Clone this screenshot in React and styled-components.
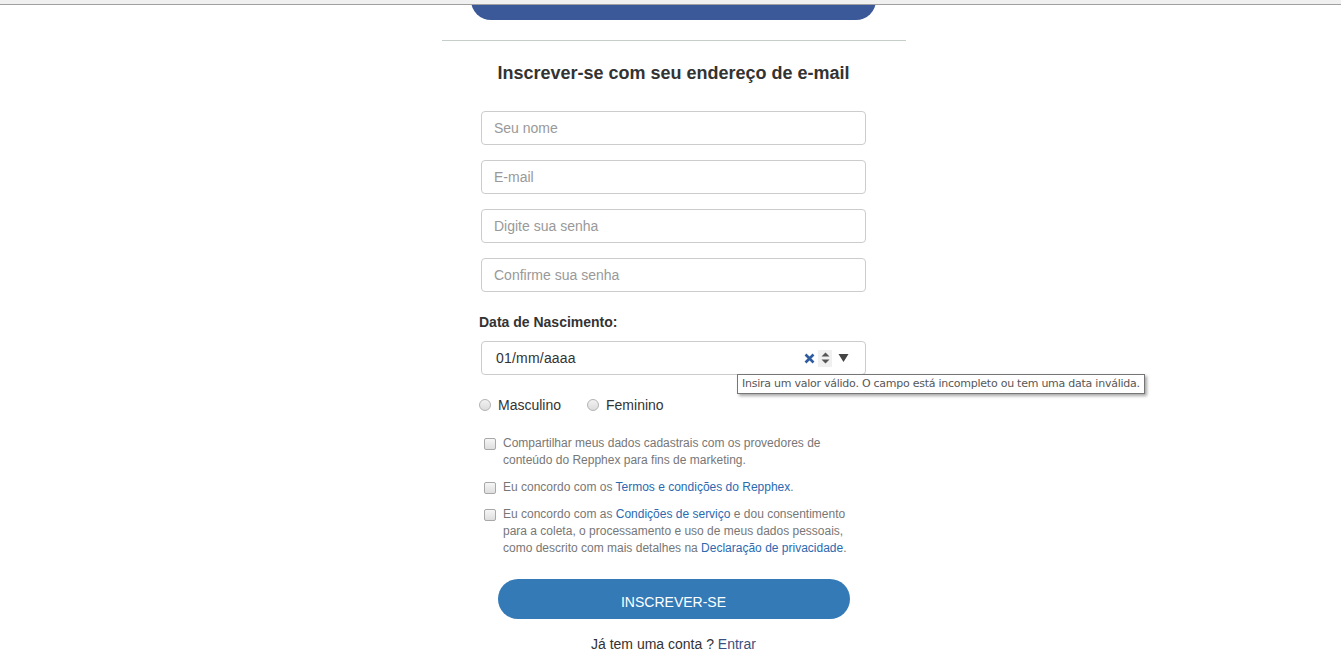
import React from 'react';
import styled, { createGlobalStyle } from 'styled-components';

const GlobalStyle = createGlobalStyle`
  body {
    margin: 0;
    background: #fff;
    font-family: "Liberation Sans", Arial, sans-serif;
  }
`;

const Chrome = styled.div`
  height: 4px;
  background: #f0f0f0;
  border-bottom: 1px solid #a0a0a0;
`;

const Page = styled.div`
  display: flex;
  justify-content: center;
  padding-left: 6px;
`;

const Column = styled.div`
  width: 464px;
  display: flex;
  flex-direction: column;
  align-items: center;
`;

const TopClip = styled.div`
  width: 405px;
  height: 15px;
  overflow: hidden;
  display: flex;
  align-items: flex-end;
`;

const FacebookButton = styled.div`
  width: 405px;
  height: 40px;
  flex-shrink: 0;
  border-radius: 20px;
  background: #3b5998;
`;

const Divider = styled.hr`
  width: 100%;
  border: 0;
  border-top: 1px solid #c5cfc8;
  margin: 20px 0 0;
`;

const Title = styled.h2`
  margin: 22px 0 0;
  font-size: 18px;
  font-weight: bold;
  color: #333;
`;

const Form = styled.form`
  width: 385px;
  margin-top: 27px;
  display: flex;
  flex-direction: column;
`;

const Input = styled.input`
  box-sizing: border-box;
  width: 100%;
  height: 34px;
  margin-bottom: 15px;
  padding: 0 12px;
  border: 1px solid #ccc;
  border-radius: 4px;
  font-family: inherit;
  font-size: 14px;
  color: #333;
  outline: none;
  &::placeholder {
    color: #999;
  }
`;

const Label = styled.label`
  margin: 7px 0 0 -2px;
  font-size: 14px;
  font-weight: bold;
  color: #333;
`;

const DateWrap = styled.div`
  position: relative;
  margin-top: 11px;
`;

const DateField = styled.div`
  box-sizing: border-box;
  height: 34px;
  padding: 0 16px 0 14px;
  border: 1px solid #ccc;
  border-radius: 4px;
  display: flex;
  align-items: center;
  font-size: 14px;
  color: #333;
`;

const DateText = styled.span`
  flex: 1;
  letter-spacing: 0.2px;
`;

const DateControls = styled.div`
  display: flex;
  align-items: center;
  gap: 3px;
`;

const Spinner = styled.div`
  width: 14px;
  height: 17px;
  background: #f0f0f0;
  display: flex;
  align-items: center;
  justify-content: center;
  margin-right: 3px;
`;

const Tooltip = styled.div`
  position: absolute;
  left: 256px;
  top: 33px;
  white-space: nowrap;
  padding: 2px 4px 3px;
  border: 1px solid #767676;
  background: #fff;
  box-shadow: 2px 2px 3px rgba(0, 0, 0, 0.35);
  font-family: "DejaVu Sans", sans-serif;
  font-size: 11px;
  letter-spacing: -0.25px;
  color: #575757;
`;

const RadioRow = styled.div`
  display: flex;
  align-items: center;
  gap: 26px;
  margin: 22px 0 0 -2px;
`;

const RadioOption = styled.label`
  display: flex;
  align-items: center;
  gap: 7px;
  font-size: 14px;
  color: #333;
`;

const RadioDot = styled.span`
  box-sizing: border-box;
  width: 12px;
  height: 12px;
  border-radius: 50%;
  border: 1px solid #b3b3b3;
  background: linear-gradient(#f2f2f2, #dcdcdc);
`;

const Checks = styled.div`
  display: flex;
  flex-direction: column;
  gap: 10px;
  margin: 22px 0 0 3px;
  padding-right: 8px;
`;

const CheckRow = styled.label`
  display: flex;
  align-items: flex-start;
  gap: 7px;
  font-size: 12px;
  line-height: 17px;
  color: #777;
`;

const CheckBox = styled.span`
  box-sizing: border-box;
  flex-shrink: 0;
  width: 12px;
  height: 12px;
  margin-top: 3px;
  border: 1px solid #a8a8a8;
  border-radius: 2px;
  background: linear-gradient(#f6f6f6, #dedede);
`;

const Link = styled.a`
  color: #2b6ab0;
  text-decoration: none;
`;

const Submit = styled.button`
  align-self: center;
  width: 352px;
  height: 40px;
  margin-top: 22px;
  padding: 5px 0 0;
  border: 0;
  border-radius: 20px;
  background: #337ab7;
  color: #fff;
  font-family: inherit;
  font-size: 14px;
`;

const Footer = styled.p`
  margin: 17px 0 0;
  text-align: center;
  font-size: 14px;
  color: #333;
`;

const FooterLink = styled.a`
  color: #3b5080;
  text-decoration: none;
`;

export default function App() {
  return (
    <>
      <GlobalStyle />
      <Chrome />
      <Page>
        <Column>
          <TopClip>
            <FacebookButton />
          </TopClip>
          <Divider />
          <Title>Inscrever-se com seu endereço de e-mail</Title>
          <Form onSubmit={(e) => e.preventDefault()}>
            <Input placeholder="Seu nome" />
            <Input placeholder="E-mail" />
            <Input placeholder="Digite sua senha" />
            <Input placeholder="Confirme sua senha" />
            <Label>Data de Nascimento:</Label>
            <DateWrap>
              <DateField>
                <DateText>01/mm/aaaa</DateText>
                <DateControls>
                  <svg width="11" height="11" viewBox="0 0 11 11">
                    <path d="M1.5 1.5 L9.5 9.5 M9.5 1.5 L1.5 9.5" stroke="#2f5c9e" strokeWidth="2.6" />
                  </svg>
                  <Spinner>
                    <svg width="9" height="14" viewBox="0 0 9 14">
                      <path d="M0.5 5.5 L4.5 1.5 L8.5 5.5 Z M0.5 8.5 L4.5 12.5 L8.5 8.5 Z" fill="#555" />
                    </svg>
                  </Spinner>
                  <svg width="11" height="10" viewBox="0 0 11 10">
                    <path d="M0.5 1 L10.5 1 L5.5 9 Z" fill="#444" />
                  </svg>
                </DateControls>
              </DateField>
              <Tooltip>Insira um valor válido. O campo está incompleto ou tem uma data inválida.</Tooltip>
            </DateWrap>
            <RadioRow>
              <RadioOption><RadioDot />Masculino</RadioOption>
              <RadioOption><RadioDot />Feminino</RadioOption>
            </RadioRow>
            <Checks>
              <CheckRow>
                <CheckBox />
                <span>Compartilhar meus dados cadastrais com os provedores de conteúdo do Repphex para fins de marketing.</span>
              </CheckRow>
              <CheckRow>
                <CheckBox />
                <span>Eu concordo com os <Link href="#">Termos e condições do Repphex</Link>.</span>
              </CheckRow>
              <CheckRow>
                <CheckBox />
                <span>
                  Eu concordo com as <Link href="#">Condições de serviço</Link> e dou consentimento para a coleta, o processamento e uso de meus dados pessoais, como descrito com mais detalhes na <Link href="#">Declaração de privacidade</Link>.
                </span>
              </CheckRow>
            </Checks>
            <Submit type="submit">INSCREVER-SE</Submit>
            <Footer>Já tem uma conta ? <FooterLink href="#">Entrar</FooterLink></Footer>
          </Form>
        </Column>
      </Page>
    </>
  );
}
